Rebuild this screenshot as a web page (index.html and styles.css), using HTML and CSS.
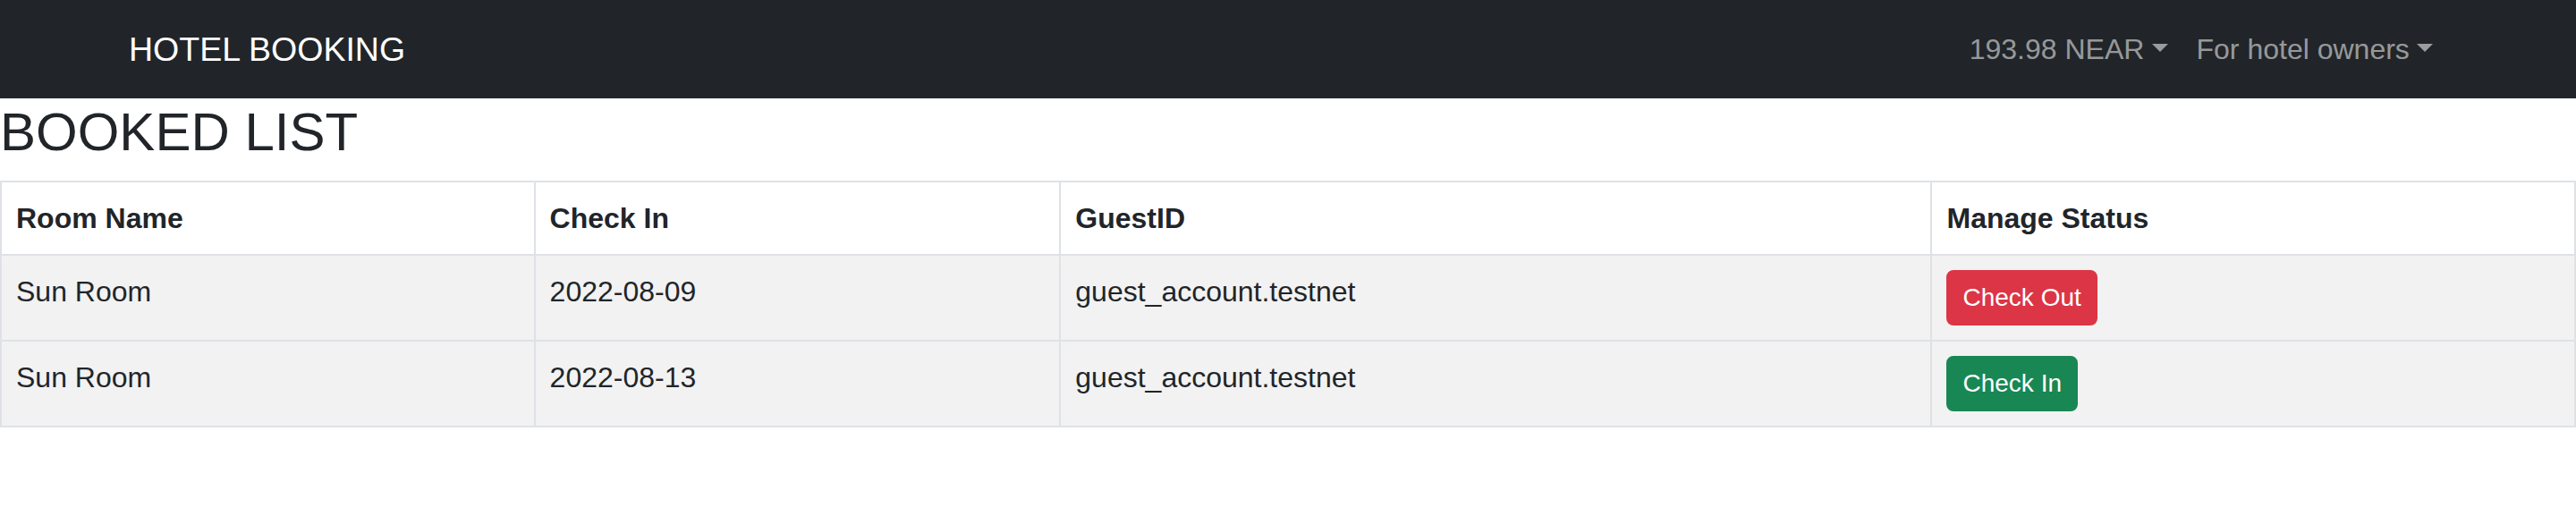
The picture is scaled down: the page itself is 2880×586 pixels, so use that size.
FILE: index.html
```html
<!DOCTYPE html>
<html lang="en">
<head>
<meta charset="utf-8">
<title>Hotel Booking</title>
<link rel="stylesheet" href="styles.css">
</head>
<body>
<nav class="navbar">
  <div class="container">
    <a class="brand" href="#">HOTEL BOOKING</a>
    <ul class="nav">
      <li><a class="nav-link dropdown-toggle" href="#">193.98 NEAR</a></li>
      <li><a class="nav-link dropdown-toggle" href="#">For hotel owners</a></li>
    </ul>
  </div>
</nav>
<h2 class="title">BOOKED LIST</h2>
<table class="booked">
  <colgroup>
    <col class="c1"><col class="c2"><col class="c3"><col class="c4">
  </colgroup>
  <thead>
    <tr><th>Room Name</th><th>Check In</th><th>GuestID</th><th>Manage Status</th></tr>
  </thead>
  <tbody>
    <tr>
      <td>Sun Room</td><td>2022-08-09</td><td>guest_account.testnet</td>
      <td><button class="btn btn-danger">Check Out</button></td>
    </tr>
    <tr>
      <td>Sun Room</td><td>2022-08-13</td><td>guest_account.testnet</td>
      <td><button class="btn btn-success">Check In</button></td>
    </tr>
  </tbody>
</table>
</body>
</html>
```

FILE: styles.css
```css
* { box-sizing: border-box; }
html, body {
  margin: 0;
  padding: 0;
  background: #fff;
  color: #212529;
  font-family: "Liberation Sans", Arial, sans-serif;
  font-size: 32px;
  line-height: 1.5;
}
a { text-decoration: none; }

.navbar {
  background: #212529;
  padding: 15px 0;
}
.container {
  display: flex;
  align-items: center;
  justify-content: space-between;
  padding: 0 144px;
}
.brand {
  color: #fff;
  font-size: 37.5px;
  line-height: 60px;
  padding: 10px 0;
}
.nav {
  display: flex;
  list-style: none;
  margin: 0;
  padding: 0;
}
.nav-link {
  display: block;
  padding: 16px 16px;
  color: rgba(255, 255, 255, 0.55);
  font-size: 32px;
  line-height: 48px;
}
.dropdown-toggle::after {
  content: "";
  display: inline-block;
  margin-left: 0.255em;
  vertical-align: 0.255em;
  border-top: 0.3em solid;
  border-right: 0.3em solid transparent;
  border-left: 0.3em solid transparent;
  border-bottom: 0;
}

.title {
  margin: 0 0 16px;
  font-size: 60px;
  font-weight: 400;
  line-height: 76px;
  color: #212529;
}

.booked {
  width: 100%;
  table-layout: fixed;
  border-collapse: collapse;
  border: 2px solid #dee2e6;
}
.c1 { width: 20.73%; }
.c2 { width: 20.42%; }
.c3 { width: 33.85%; }
.c4 { width: 25%; }
.booked th,
.booked td {
  border: 2px solid #dee2e6;
  padding: 16px;
  text-align: left;
  vertical-align: top;
}
.booked th {
  font-weight: 700;
  background: #fff;
}
.booked td {
  background: #f2f2f2;
}

.btn {
  display: inline-block;
  font-family: inherit;
  font-size: 28px;
  line-height: 42px;
  padding: 8px 16px;
  border-radius: 8px;
  border: 2px solid transparent;
  color: #fff;
  cursor: pointer;
}
.btn-danger { background: #dc3545; border-color: #dc3545; }
.btn-success { background: #198754; border-color: #198754; }
```
